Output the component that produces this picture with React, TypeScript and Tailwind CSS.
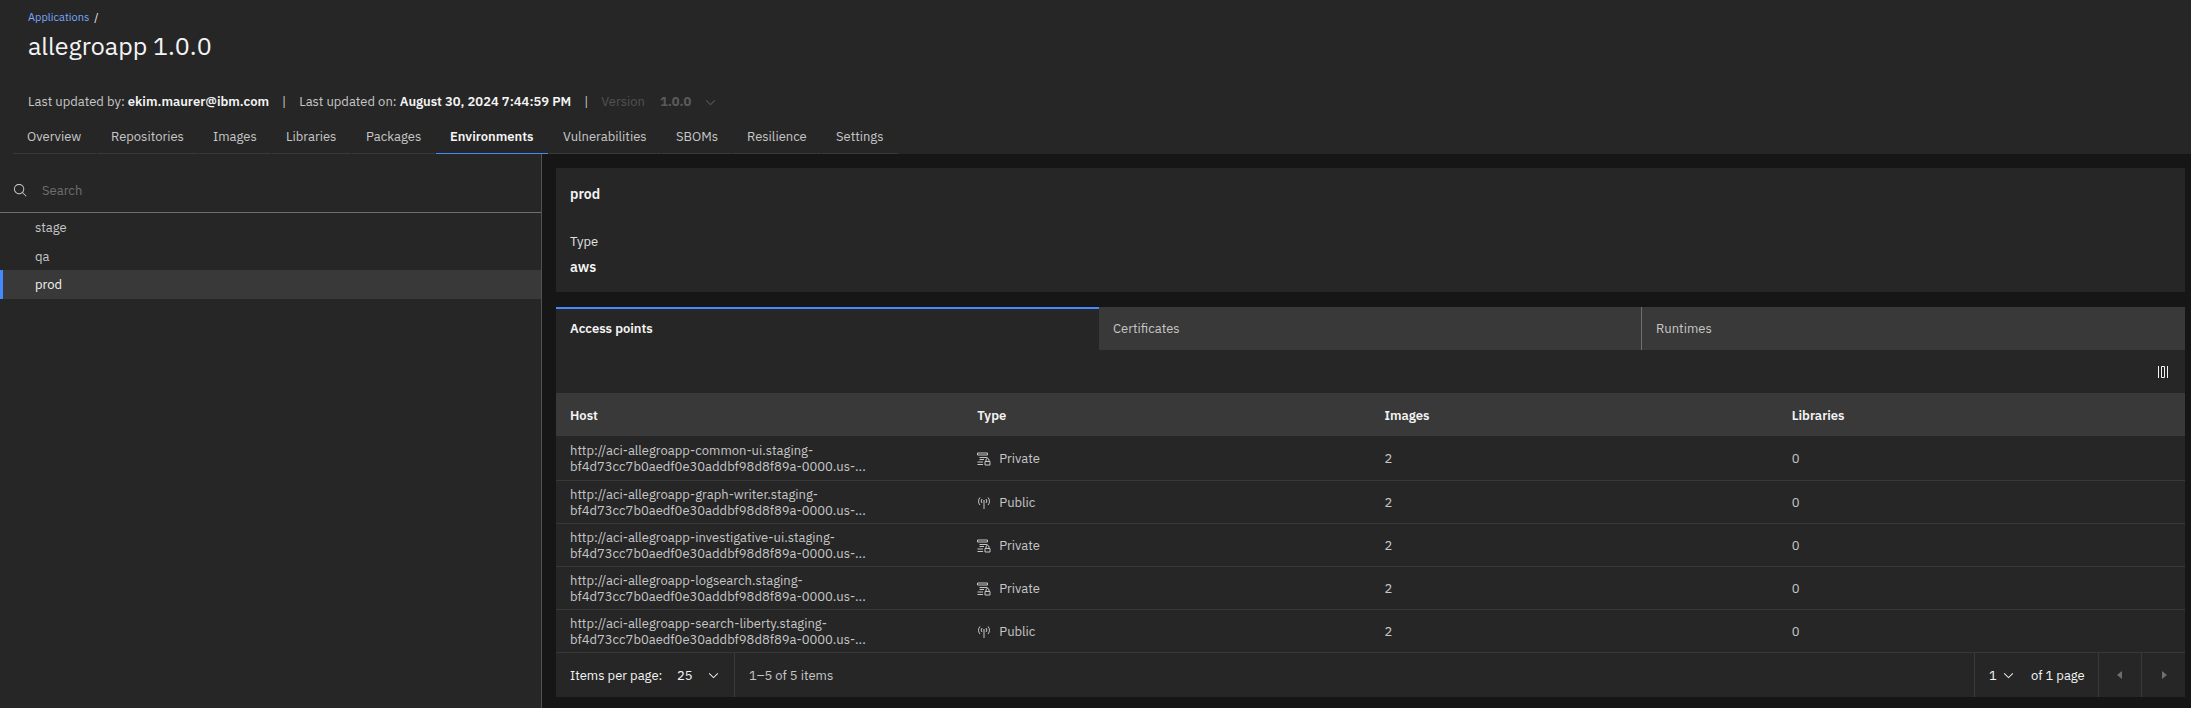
import React from "react";

type IconProps = { className?: string };

const ChevronDown = ({ className = "" }: IconProps) => (
  <svg viewBox="0 0 16 16" fill="currentColor" aria-hidden="true" className={`size-[15px] pointer-events-none ${className}`}>
    <path d="M8 11 3 6 3.7 5.3 8 9.6 12.3 5.3 13 6z" />
  </svg>
);

const SearchIcon = () => (
  <svg viewBox="0 0 32 32" fill="currentColor" aria-hidden="true" className="size-[15px] shrink-0 text-[#c6c6c6]">
    <path d="M29 27.586l-7.552-7.552a11.018 11.018 0 1 0-1.414 1.414L27.586 29ZM4 13a9 9 0 1 1 9 9 9.01 9.01 0 0 1-9-9Z" />
  </svg>
);

const ColumnIcon = () => (
  <svg viewBox="0 0 32 32" fill="currentColor" aria-hidden="true" className="size-4">
    <path d="M24 4h2v24h-2zM6 4h2v24H6zM18 6v20h-4V6h4m0-2h-4a2 2 0 0 0-2 2v20a2 2 0 0 0 2 2h4a2 2 0 0 0 2-2V6a2 2 0 0 0-2-2Z" />
  </svg>
);

const PrivateIcon = () => (
  <svg viewBox="0 0 28 28" fill="none" stroke="currentColor" strokeWidth="2" aria-hidden="true" className="size-[14px] shrink-0">
    <path d="M1 2h20v4H1zM5 11h16M5 15h9M1 20h11M1 25h11M16 19h10v7H16zM18 19v-3a3 3 0 0 1 6 0v3" />
  </svg>
);

const PublicIcon = () => (
  <svg viewBox="0 0 28 28" fill="none" stroke="currentColor" strokeWidth="2" aria-hidden="true" className="size-[14px] shrink-0">
    <path d="M14 12v14M6 18a11 11 0 0 1 0-15M22 18a11 11 0 0 0 0-15M10 14a6 6 0 0 1 0-8M18 14a6 6 0 0 0 0-8" />
    <circle cx="14" cy="10" r="1" />
  </svg>
);

const tabs: { label: string; width: string }[] = [
  { label: "Overview", width: "w-[83px]" },
  { label: "Repositories", width: "w-[101px]" },
  { label: "Images", width: "w-[72px]" },
  { label: "Libraries", width: "w-[79px]" },
  { label: "Packages", width: "w-[83px]" },
  { label: "Environments", width: "w-[112px]" },
  { label: "Vulnerabilities", width: "w-[112px]" },
  { label: "SBOMs", width: "w-[70px]" },
  { label: "Resilience", width: "w-[88px]" },
  { label: "Settings", width: "w-[76px]" },
];

const rows = [
  { host: "common-ui", type: "Private", images: 2, libraries: 0 },
  { host: "graph-writer", type: "Public", images: 2, libraries: 0 },
  { host: "investigative-ui", type: "Private", images: 2, libraries: 0 },
  { host: "logsearch", type: "Private", images: 2, libraries: 0 },
  { host: "search-liberty", type: "Public", images: 2, libraries: 0 },
];

function Header() {
  return (
    <header className="bg-[#262626] pt-2">
      <nav aria-label="Breadcrumb" className="pl-7 text-[11px] leading-[18px]">
        <a href="#applications" className="text-[#78a9ff]">Applications</a>
        <span className="ml-[5px] text-[#f4f4f4]">/</span>
      </nav>
      <h1 className="mt-1 pl-7 text-[25px] leading-8 text-[#f4f4f4]">allegroapp 1.0.0</h1>
      <div className="mt-7 flex h-6 items-center pl-7 text-[#c6c6c6]">
        <span>Last updated by: <b className="font-semibold text-[#f4f4f4]">ekim.maurer@ibm.com</b></span>
        <span className="mx-[13px]">|</span>
        <span>Last updated on: <b className="font-semibold text-[#f4f4f4]">August 30, 2024 7:44:59 PM</b></span>
        <span className="mx-[13px]">|</span>
        <label htmlFor="version" className="text-[#525252]">Version</label>
        <span className="relative ml-[15px] flex items-center text-[#5a5a5a]">
          <select id="version" disabled className="w-[58px] appearance-none bg-transparent font-bold opacity-100">
            <option>1.0.0</option>
          </select>
          <ChevronDown className="absolute right-0" />
        </span>
      </div>
      <div role="tablist" aria-label="Application" className="mt-1 flex gap-px pl-[13px]">
        {tabs.map(({ label, width }) => {
          const on = label === "Environments";
          return (
            <button
              key={label}
              role="tab"
              aria-selected={on}
              className={`${width} h-9 shrink-0 whitespace-nowrap border-b pl-[14px] pt-[2px] text-left ${
                on ? "border-[#4589ff] font-semibold text-[#f4f4f4]" : "border-[#393939] text-[#c6c6c6]"
              }`}
            >
              {label}
            </button>
          );
        })}
      </div>
    </header>
  );
}

function Sidebar() {
  return (
    <aside className="w-[542px] shrink-0 border-r border-[#525252] bg-[#262626] pt-[14px]">
      <label className="flex h-[45px] items-center border-b border-[#6f6f6f] pt-px pl-[13px]">
        <SearchIcon />
        <input
          type="search"
          aria-label="Search"
          placeholder="Search"
          className="ml-[14px] flex-1 bg-transparent text-[#f4f4f4] outline-none placeholder:text-[#6f6f6f]"
        />
      </label>
      <ul>
        {["stage", "qa", "prod"].map((env) => (
          <li key={env}>
            <button
              className={`flex h-[29px] w-full items-center border-l-[3px] pl-8 ${
                env === "prod" ? "-mt-px border-[#4589ff] bg-[#393939] text-[#f4f4f4]" : "border-transparent text-[#c6c6c6]"
              }`}
            >
              {env}
            </button>
          </li>
        ))}
      </ul>
    </aside>
  );
}

function Pagination() {
  return (
    <footer className="flex h-11 items-stretch bg-[#262626] text-[#f4f4f4]">
      <div className="flex w-[179px] items-center border-r border-[#393939] pt-[2px] pl-[14px]">
        <label htmlFor="page-size" className="w-[107px] whitespace-nowrap">Items per page:</label>
        <span className="relative flex items-center">
          <select id="page-size" className="w-11 appearance-none bg-transparent">
            <option>25</option>
          </select>
          <ChevronDown className="absolute right-0" />
        </span>
      </div>
      <span className="flex items-center pt-[2px] pl-[14px] text-[#c6c6c6]">1–5 of 5 items</span>
      <div className="ml-auto flex w-[124px] items-center border-l border-[#393939] pt-[2px] pl-[14px]">
        <span className="relative flex items-center">
          <select aria-label="Page number" className="w-[27px] appearance-none bg-transparent">
            <option>1</option>
          </select>
          <ChevronDown className="absolute right-0" />
        </span>
        <span className="ml-[15px] whitespace-nowrap">of 1 page</span>
      </div>
      <button aria-label="Previous page" disabled className="flex w-[43px] items-center justify-center border-l border-[#393939] text-[#6f6f6f]">
        <svg viewBox="0 0 32 32" fill="currentColor" className="size-4"><path d="M20 24 10 16 20 8z" /></svg>
      </button>
      <button aria-label="Next page" disabled className="flex w-11 items-center justify-center border-l border-[#393939] text-[#6f6f6f]">
        <svg viewBox="0 0 32 32" fill="currentColor" className="size-4"><path d="M12 8 22 16 12 24z" /></svg>
      </button>
    </footer>
  );
}

export default function App() {
  return (
    <div className="flex min-h-screen flex-col bg-[#161616] font-['IBM_Plex_Sans',Roboto,sans-serif] text-[13px] leading-4">
      <Header />
      <div className="flex flex-1">
        <Sidebar />
        <main className="min-w-0 flex-1 pt-[14px] pr-[6px] pb-[11px] pl-[14px]">
          <section className="h-[124px] bg-[#262626] px-[14px] pt-4">
            <h2 className="text-sm leading-5 font-semibold text-[#f4f4f4]">prod</h2>
            <dl className="mt-7">
              <dt className="leading-5 text-[#e0e0e0]">Type</dt>
              <dd className="mt-[5px] text-sm leading-5 font-semibold text-[#f4f4f4]">aws</dd>
            </dl>
          </section>
          <div role="tablist" aria-label="Environment" className="mt-[15px] grid h-[43px] grid-cols-3">
            <button role="tab" aria-selected="true" className="border-t-2 border-[#4589ff] bg-[#262626] px-[14px] pb-[2px] text-left font-semibold text-[#f4f4f4]">
              Access points
            </button>
            <button role="tab" aria-selected="false" className="border-r border-[#6f6f6f] bg-[#393939] px-[14px] text-left text-[#c6c6c6]">
              Certificates
            </button>
            <button role="tab" aria-selected="false" className="bg-[#393939] px-[14px] text-left text-[#c6c6c6]">
              Runtimes
            </button>
          </div>
          <div className="flex h-[43px] items-center justify-end bg-[#262626] pr-[14px]">
            <button aria-label="Configure columns" className="text-[#f4f4f4]"><ColumnIcon /></button>
          </div>
          <table className="w-full table-fixed border-collapse bg-[#262626] text-left">
            <thead>
              <tr className="h-[43px] bg-[#393939] text-[#f4f4f4]">
                {["Host", "Type", "Images", "Libraries"].map((h) => (
                  <th key={h} className="px-[14px] pt-[2px] font-semibold">{h}</th>
                ))}
              </tr>
            </thead>
            <tbody>
              {rows.map((r) => (
                <tr key={r.host} className="h-[43px] border-b border-[#393939] text-[#c6c6c6] first:h-11">
                  <td className="px-[14px] pt-[3px]">
                    http://aci-allegroapp-{r.host}.staging-
                    <br />
                    bf4d73cc7b0aedf0e30addbf98d8f89a-0000.us-...
                  </td>
                  <td className="px-[14px] pt-[3px]">
                    <span className="flex items-center gap-2">
                      {r.type === "Private" ? <PrivateIcon /> : <PublicIcon />}
                      {r.type}
                    </span>
                  </td>
                  <td className="px-[14px] pt-[3px]">{r.images}</td>
                  <td className="px-[14px] pt-[3px]">{r.libraries}</td>
                </tr>
              ))}
            </tbody>
          </table>
          <Pagination />
        </main>
      </div>
    </div>
  );
}
